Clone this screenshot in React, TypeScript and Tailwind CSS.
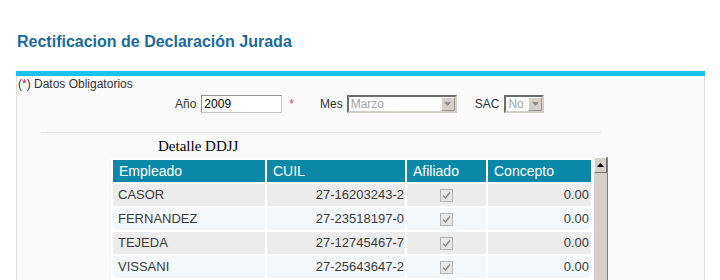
const rows = [
  { nombre: "CASOR", cuil: "27-16203243-2", concepto: "0.00" },
  { nombre: "FERNANDEZ", cuil: "27-23518197-0", concepto: "0.00" },
  { nombre: "TEJEDA", cuil: "27-12745467-7", concepto: "0.00" },
  { nombre: "VISSANI", cuil: "27-25643647-2", concepto: "0.00" },
];

function DisabledCheck() {
  return (
    <span className="flex h-[13px] w-[13px] items-center justify-center border border-[#b4b4b4] bg-[#e6e6e6]">
      <svg width="9" height="9" viewBox="0 0 9 9">
        <path d="M1 4.5 L3.5 7 L8 1.5" fill="none" stroke="#8f8f8f" strokeWidth="1.6" />
      </svg>
    </span>
  );
}

function ArrowButton() {
  return (
    <span className="flex h-[14px] w-[14px] items-center justify-center border border-t-white border-l-white border-b-[#9a9890] border-r-[#9a9890] bg-[#d4d0c8]">
      <svg width="7" height="4" viewBox="0 0 7 4">
        <path d="M0 0 H7 L3.5 4 Z" fill="#8a8a8a" />
      </svg>
    </span>
  );
}

function DisabledSelect({ value, width }: { value: string; width: string }) {
  return (
    <div
      className={`flex h-[18px] ${width} items-center justify-between border-2 border-t-[#6e6e6e] border-l-[#6e6e6e] border-b-[#d4d0c8] border-r-[#d4d0c8] bg-white pl-[2px]`}
    >
      <span className="text-[12px] leading-[14px] text-[#a3a3a3]">{value}</span>
      <ArrowButton />
    </div>
  );
}

export default function App() {
  return (
    <div className="h-[280px] w-[720px] overflow-hidden bg-white font-['Liberation_Sans',Arial,sans-serif]">
      <h1 className="pl-[17px] pt-[32px] text-[16px] leading-[20px] font-bold text-[#1a6b98]">
        Rectificacion de Declaración Jurada
      </h1>

      <div className="ml-[16px] mt-[19px] w-[689px]">
        <div className="h-[5px] bg-[#1ec0ef]" />
        <div className="h-[300px] border-x border-[#dcdcdc] bg-[#fafafa]">
          <p className="pl-px pt-px text-[12px] leading-[14px] text-[#333]">
            (<span className="text-[#c8102e]">*</span>) Datos Obligatorios
          </p>

          {/* filtros */}
          <div className="mt-[4px] flex h-[18px] items-center pl-[158px] text-[12px] text-[#333]">
            <span>Año</span>
            <input
              readOnly
              value="2009"
              className="ml-[5px] h-[18px] w-[81px] border border-t-[#8e8e8e] border-l-[#8e8e8e] border-b-[#c6c6c6] border-r-[#c6c6c6] bg-white px-[2px] text-[12px] text-black outline-none"
            />
            <span className="ml-[7px] text-[#e0405a]">*</span>
            <span className="ml-[26px]">Mes</span>
            <div className="ml-[4px]">
              <DisabledSelect value="Marzo" width="w-[110px]" />
            </div>
            <span className="ml-[18px]">SAC</span>
            <div className="ml-[5px]">
              <DisabledSelect value="No" width="w-[40px]" />
            </div>
          </div>

          <div className="ml-[24px] mt-[19px] h-px w-[560px] bg-[#e4e4e4]" />

          <p className="mt-[5px] pl-[141px] font-['Liberation_Serif','Times_New_Roman',serif] text-[15px] leading-[17px] text-black">
            Detalle DDJJ
          </p>

          <div className="mt-[3px] flex items-start pl-[94px]">
            <table className="border-separate border-spacing-[2px] bg-white text-[13px] leading-[16px]">
              <thead>
                <tr className="text-left text-[14px] text-white">
                  <th className="h-[22px] w-[152px] bg-[#0b87a8] p-0 pl-[6px] font-normal">Empleado</th>
                  <th className="h-[22px] w-[138px] bg-[#0b87a8] p-0 pl-[6px] font-normal">CUIL</th>
                  <th className="h-[22px] w-[79px] bg-[#0b87a8] p-0 pl-[6px] font-normal">Afiliado</th>
                  <th className="h-[22px] w-[103px] bg-[#0b87a8] p-0 pl-[6px] font-normal">Concepto</th>
                </tr>
              </thead>
              <tbody>
                {rows.map((r, i) => (
                  <tr
                    key={r.cuil}
                    className={`text-[#3a3a3a] ${i % 2 === 0 ? "bg-[#ececec]" : "bg-[#f4f8fb]"}`}
                  >
                    <td className="h-[22px] p-0 pl-[5px]">{r.nombre}</td>
                    <td className="h-[22px] p-0 pr-[1px] text-right">{r.cuil}</td>
                    <td className="h-[22px] p-0">
                      <div className="flex justify-center">
                        <DisabledCheck />
                      </div>
                    </td>
                    <td className="h-[22px] p-0 pr-[2px] text-right">{r.concepto}</td>
                  </tr>
                ))}
              </tbody>
            </table>

            {/* barra de scroll */}
            <div className="-mt-px flex h-[130px] w-[15px] flex-col border-l border-r border-l-[#f4f3ef] border-r-[#7d7d7d] bg-[#d4d0c8]">
              <div className="flex h-[16px] items-center justify-center border border-t-white border-l-white border-b-[#6f6f6f] border-r-[#6f6f6f] bg-[#d4d0c8]">
                <svg width="7" height="4" viewBox="0 0 7 4">
                  <path d="M0 4 H7 L3.5 0 Z" fill="#000" />
                </svg>
              </div>
            </div>
          </div>
        </div>
      </div>
    </div>
  );
}
